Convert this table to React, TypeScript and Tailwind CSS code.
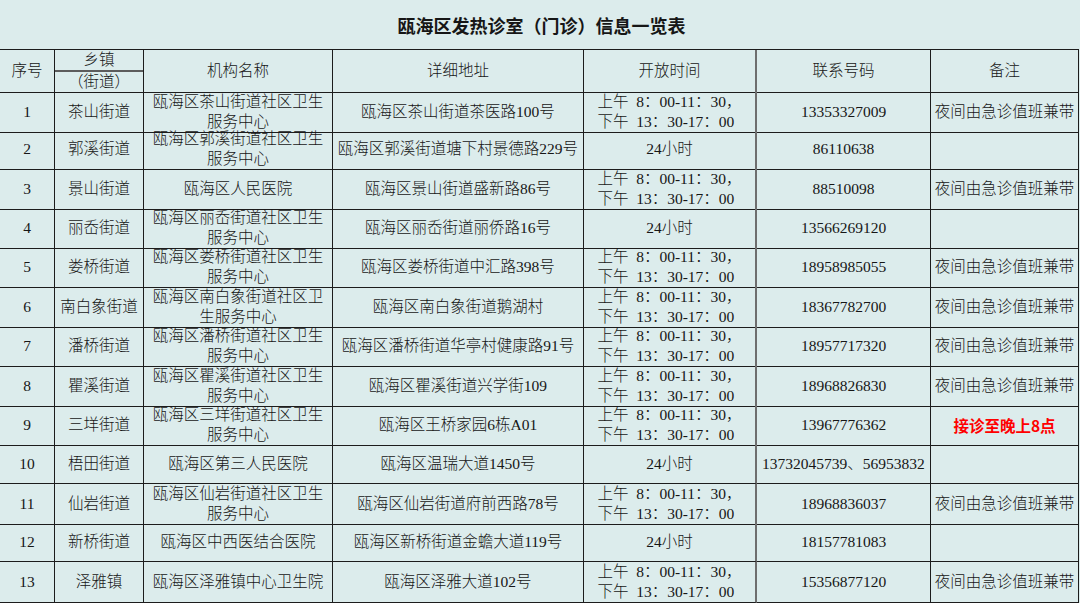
import React from "react";

type Row = {
  no: string;
  town: string;
  org: string[];
  addr: string;
  open: "day" | "24";
  phone: string;
  note?: string;
  red?: boolean;
  h: number;
};

const svc = (name: string) => [`瓯海区${name}社区卫生`, "服务中心"];

const rows: Row[] = [
  { no: "1", town: "茶山街道", org: svc("茶山街道"), addr: "瓯海区茶山街道茶医路100号", open: "day", phone: "13353327009", note: "夜间由急诊值班兼带", h: 37 },
  { no: "2", town: "郭溪街道", org: svc("郭溪街道"), addr: "瓯海区郭溪街道塘下村景德路229号", open: "24", phone: "86110638", h: 40 },
  { no: "3", town: "景山街道", org: ["瓯海区人民医院"], addr: "瓯海区景山街道盛新路86号", open: "day", phone: "88510098", note: "夜间由急诊值班兼带", h: 39 },
  { no: "4", town: "丽岙街道", org: svc("丽岙街道"), addr: "瓯海区丽岙街道丽侨路16号", open: "24", phone: "13566269120", h: 39 },
  { no: "5", town: "娄桥街道", org: svc("娄桥街道"), addr: "瓯海区娄桥街道中汇路398号", open: "day", phone: "18958985055", note: "夜间由急诊值班兼带", h: 40 },
  { no: "6", town: "南白象街道", org: ["瓯海区南白象街道社区卫", "生服务中心"], addr: "瓯海区南白象街道鹅湖村", open: "day", phone: "18367782700", note: "夜间由急诊值班兼带", h: 39 },
  { no: "7", town: "潘桥街道", org: svc("潘桥街道"), addr: "瓯海区潘桥街道华亭村健康路91号", open: "day", phone: "18957717320", note: "夜间由急诊值班兼带", h: 40 },
  { no: "8", town: "瞿溪街道", org: svc("瞿溪街道"), addr: "瓯海区瞿溪街道兴学街109", open: "day", phone: "18968826830", note: "夜间由急诊值班兼带", h: 39 },
  { no: "9", town: "三垟街道", org: svc("三垟街道"), addr: "瓯海区王桥家园6栋A01", open: "day", phone: "13967776362", note: "接诊至晚上8点", red: true, h: 40 },
  { no: "10", town: "梧田街道", org: ["瓯海区第三人民医院"], addr: "瓯海区温瑞大道1450号", open: "24", phone: "13732045739、56953832", h: 39 },
  { no: "11", town: "仙岩街道", org: svc("仙岩街道"), addr: "瓯海区仙岩街道府前西路78号", open: "day", phone: "18968836037", note: "夜间由急诊值班兼带", h: 39 },
  { no: "12", town: "新桥街道", org: ["瓯海区中西医结合医院"], addr: "瓯海区新桥街道金蟾大道119号", open: "24", phone: "18157781083", h: 39 },
  { no: "13", town: "泽雅镇", org: ["瓯海区泽雅镇中心卫生院"], addr: "瓯海区泽雅大道102号", open: "day", phone: "15356877120", note: "夜间由急诊值班兼带", h: 40 },
];

const heightClass: Record<number, string> = {
  37: "h-[37px]",
  39: "h-[39px]",
  40: "h-[40px]",
};

const cols = "grid grid-cols-[55px_89px_189px_251px_173px_174px_148px]";
const cell =
  "flex items-center justify-center text-center whitespace-nowrap border-r border-b border-[#1c1c1c] leading-[20px]";

function OpenHours({ kind }: { kind: Row["open"] }) {
  if (kind === "24") return <span>24小时</span>;
  return (
    <div className="text-left whitespace-pre">
      <div>上午{"\u2002"}8：00-11：30，</div>
      <div>下午{"\u2002"}13：30-17：00</div>
    </div>
  );
}

export default function App() {
  return (
    <div className="w-[1080px] h-[603px] overflow-hidden bg-[#dcecec] text-[#161616] text-[15.5px] font-light font-['Liberation_Serif','Noto_Sans_CJK_SC',serif]">
      <div className="flex w-[1079px] h-[49px] items-center justify-center pt-[2px] pl-[4px] text-[18px] font-bold font-['Noto_Sans_CJK_SC',sans-serif]">
        瓯海区发热诊室（门诊）信息一览表
      </div>

      <div className="w-[1079px] border-t border-[#1c1c1c]">
        <div className={`${cols} h-[42px]`}>
          <div className={cell}>序号</div>
          <div className="flex flex-col border-r border-b border-[#1c1c1c] text-center leading-[20px]">
            <div className="flex flex-1 items-center justify-center border-b-2 border-[#5c5c5c]">乡镇</div>
            <div className="flex flex-1 items-center justify-center">（街道）</div>
          </div>
          <div className={cell}>机构名称</div>
          <div className={cell}>详细地址</div>
          <div className={`${cell} border-r-2 border-r-[#6e6e6e]`}>开放时间</div>
          <div className={cell}>联系号码</div>
          <div className={cell}>备注</div>
        </div>

        {rows.map((r) => (
          <div key={r.no} className={`${cols} ${heightClass[r.h]}`}>
            <div className={cell}>{r.no}</div>
            <div className={cell}>{r.town}</div>
            <div className={cell}>
              <div>
                {r.org.map((line) => (
                  <div key={line}>{line}</div>
                ))}
              </div>
            </div>
            <div className={cell}>{r.addr}</div>
            <div className={`${cell} border-r-2 border-r-[#6e6e6e]`}>
              <OpenHours kind={r.open} />
            </div>
            <div className={cell}>{r.phone}</div>
            <div className={cell}>
              {r.note &&
                (r.red ? (
                  <span className="font-bold text-[#ff0000] font-['Noto_Sans_CJK_SC',sans-serif]">{r.note}</span>
                ) : (
                  <span>{r.note}</span>
                ))}
            </div>
          </div>
        ))}
      </div>
    </div>
  );
}
